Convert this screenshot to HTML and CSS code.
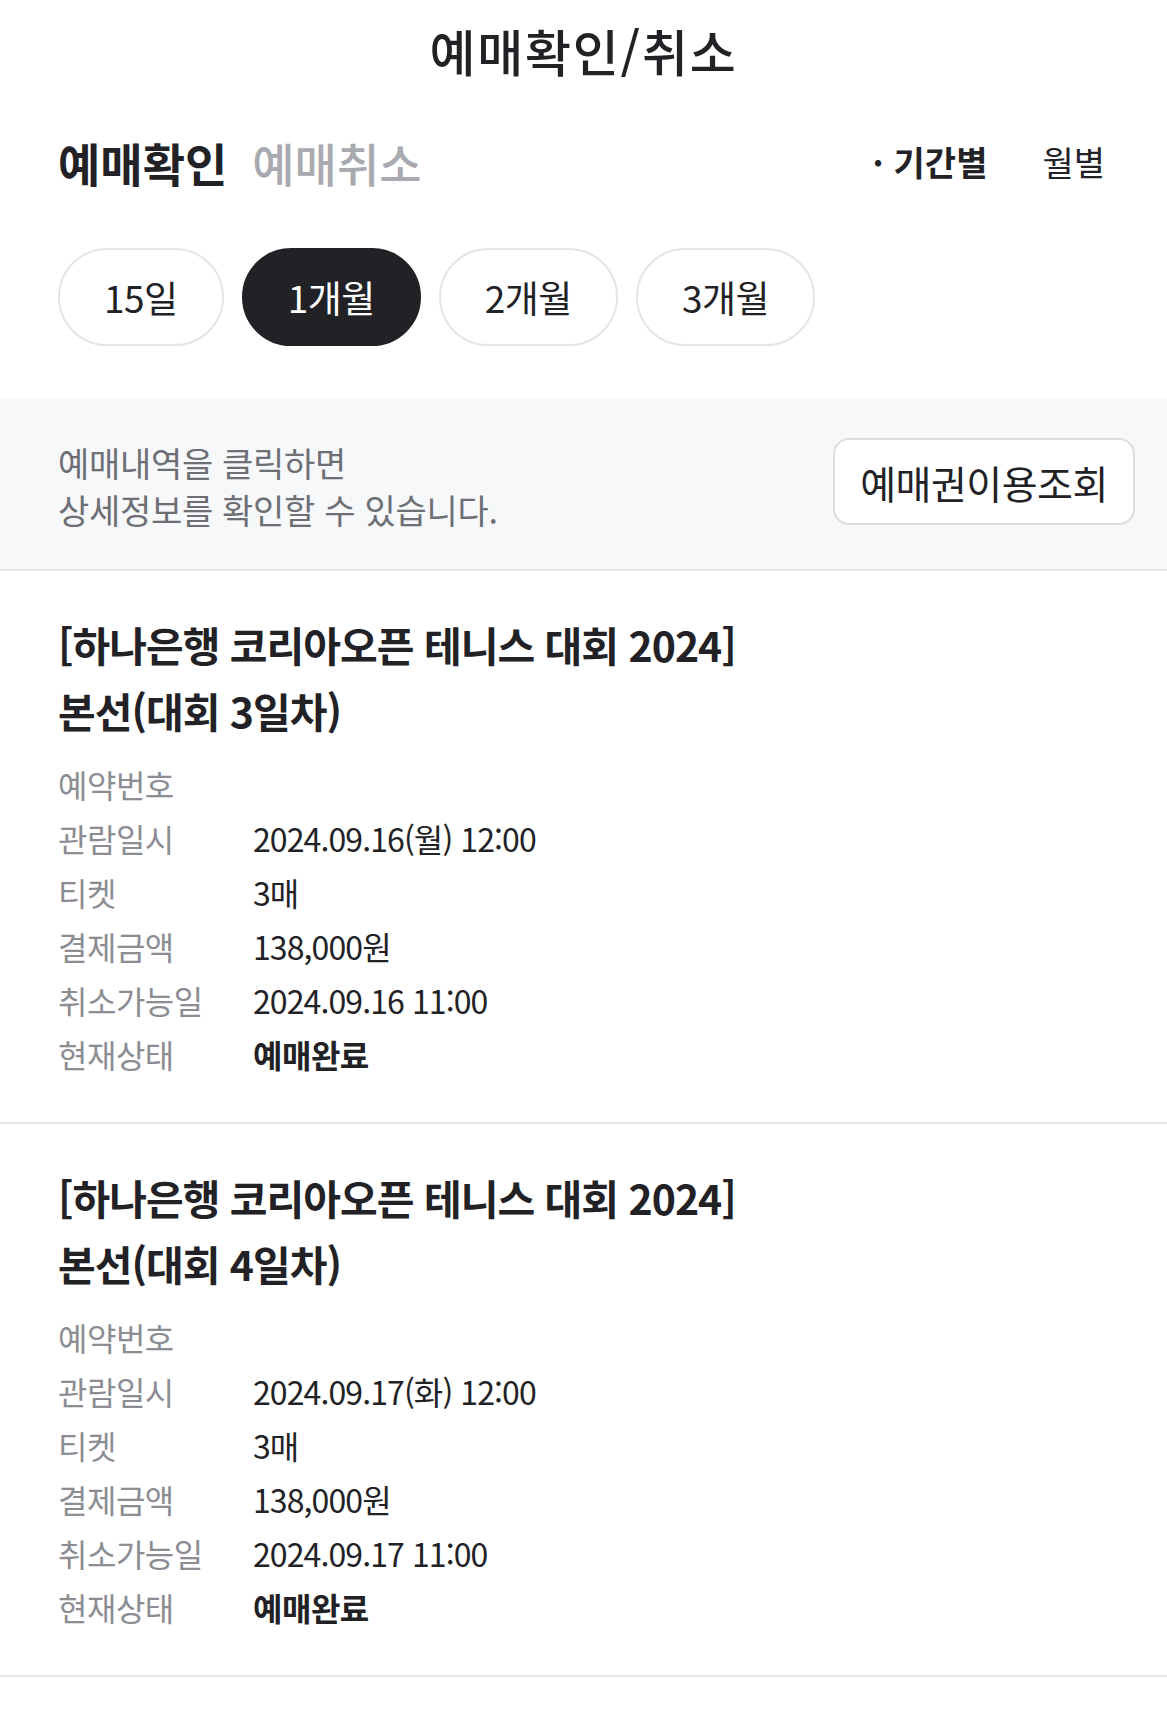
FILE: index.html
```html
<!DOCTYPE html>
<html lang="ko">
<head>
<meta charset="utf-8">
<title>예매확인/취소</title>
<link rel="stylesheet" href="styles.css">
</head>
<body>
<div class="page">
  <header class="header">
    <h1 class="header-title">예매확인/취소</h1>
  </header>

  <div class="tabbar">
    <div class="tabs">
      <span class="tab tab-active">예매확인</span>
      <span class="tab">예매취소</span>
    </div>
    <div class="modes">
      <span class="mode mode-active"><span class="mode-dot">·</span>기간별</span>
      <span class="mode">월별</span>
    </div>
  </div>

  <div class="periods">
    <span class="pill">15일</span>
    <span class="pill pill-active">1개월</span>
    <span class="pill">2개월</span>
    <span class="pill">3개월</span>
  </div>

  <section class="notice">
    <p class="notice-text">예매내역을 클릭하면<br>상세정보를 확인할 수 있습니다.</p>
    <button class="notice-btn" type="button">예매권이용조회</button>
  </section>

  <article class="card">
    <h2 class="card-title">[하나은행 코리아오픈 테니스 대회 2024]<br>본선(대회 3일차)</h2>
    <dl class="info">
      <div class="row"><dt>예약번호</dt><dd></dd></div>
      <div class="row"><dt>관람일시</dt><dd>2024.09.16(월) 12:00</dd></div>
      <div class="row"><dt>티켓</dt><dd>3매</dd></div>
      <div class="row"><dt>결제금액</dt><dd>138,000원</dd></div>
      <div class="row"><dt>취소가능일</dt><dd>2024.09.16 11:00</dd></div>
      <div class="row"><dt>현재상태</dt><dd class="strong">예매완료</dd></div>
    </dl>
  </article>

  <article class="card">
    <h2 class="card-title">[하나은행 코리아오픈 테니스 대회 2024]<br>본선(대회 4일차)</h2>
    <dl class="info">
      <div class="row"><dt>예약번호</dt><dd></dd></div>
      <div class="row"><dt>관람일시</dt><dd>2024.09.17(화) 12:00</dd></div>
      <div class="row"><dt>티켓</dt><dd>3매</dd></div>
      <div class="row"><dt>결제금액</dt><dd>138,000원</dd></div>
      <div class="row"><dt>취소가능일</dt><dd>2024.09.17 11:00</dd></div>
      <div class="row"><dt>현재상태</dt><dd class="strong">예매완료</dd></div>
    </dl>
  </article>
</div>
</body>
</html>
```

FILE: styles.css
```css
* { box-sizing: border-box; }

html, body {
  margin: 0;
  padding: 0;
  background: #ffffff;
}

body {
  font-family: "Noto Sans CJK KR", "Noto Sans", sans-serif;
  color: #222226;
}

.page {
  width: 1167px;
}

.header {
  height: 106px;
  padding-bottom: 6px;
  display: flex;
  align-items: center;
  justify-content: center;
}

.header-title {
  margin: 0;
  font-size: 50px;
  font-weight: 500;
  line-height: 64px;
  letter-spacing: 1.8px;
  color: #222226;
}

.tabbar {
  display: flex;
  align-items: center;
  justify-content: space-between;
  padding: 27px 62px 2px 58px;
  height: 87px;
}

.tabs {
  display: flex;
  gap: 25px;
}

.tab {
  font-size: 46px;
  line-height: 60px;
  font-weight: 500;
  color: #a8aab0;
  letter-spacing: 0;
}

.tab-active {
  font-weight: 700;
  color: #222226;
}

.modes {
  display: flex;
  gap: 55px;
  align-items: center;
}

.mode {
  font-size: 34px;
  line-height: 46px;
  font-weight: 400;
  color: #222226;
}

.mode-active {
  font-weight: 700;
}

.mode-dot {
  margin-right: 10px;
}

.periods {
  display: flex;
  gap: 18px;
  padding: 55px 58px 0;
}

.pill {
  height: 98px;
  padding: 0 44px;
  border: 2px solid #e4e5e9;
  border-radius: 49px;
  display: flex;
  align-items: center;
  justify-content: center;
  font-size: 37px;
  font-weight: 400;
  color: #222226;
  letter-spacing: -0.5px;
}

.pill-active {
  background: #222226;
  border-color: #222226;
  color: #ffffff;
}

.notice {
  margin-top: 52px;
  height: 173px;
  background: #f7f8fa;
  border-bottom: 2px solid #e6e7ea;
  display: flex;
  align-items: center;
  justify-content: space-between;
  padding: 4px 32px 0 58px;
}

.notice-text {
  margin: 0;
  font-size: 34px;
  line-height: 47px;
  color: #6d6f75;
  letter-spacing: -0.3px;
}

.notice-btn {
  width: 302px;
  height: 87px;
  margin-top: -8px;
  background: #ffffff;
  border: 2px solid #dcdde0;
  border-radius: 16px;
  font-family: inherit;
  font-size: 39px;
  color: #222226;
  padding: 0;
  letter-spacing: -0.5px;
}

.card {
  padding: 40px 58px 41px;
  border-bottom: 2px solid #e6e7ea;
}

.card-title {
  margin: 0;
  font-size: 41px;
  line-height: 66px;
  font-weight: 700;
  color: #222226;
  letter-spacing: -1px;
}

.info {
  margin: 14px 0 0;
}

.row {
  display: flex;
  height: 54px;
  align-items: center;
}

.row dt {
  width: 195px;
  font-size: 32px;
  color: #8b8d93;
  letter-spacing: -0.5px;
}

.row dd {
  margin: 0;
  font-size: 32px;
  color: #222226;
  letter-spacing: -0.9px;
}

.row dd.strong {
  font-weight: 700;
  letter-spacing: -0.5px;
}
```
